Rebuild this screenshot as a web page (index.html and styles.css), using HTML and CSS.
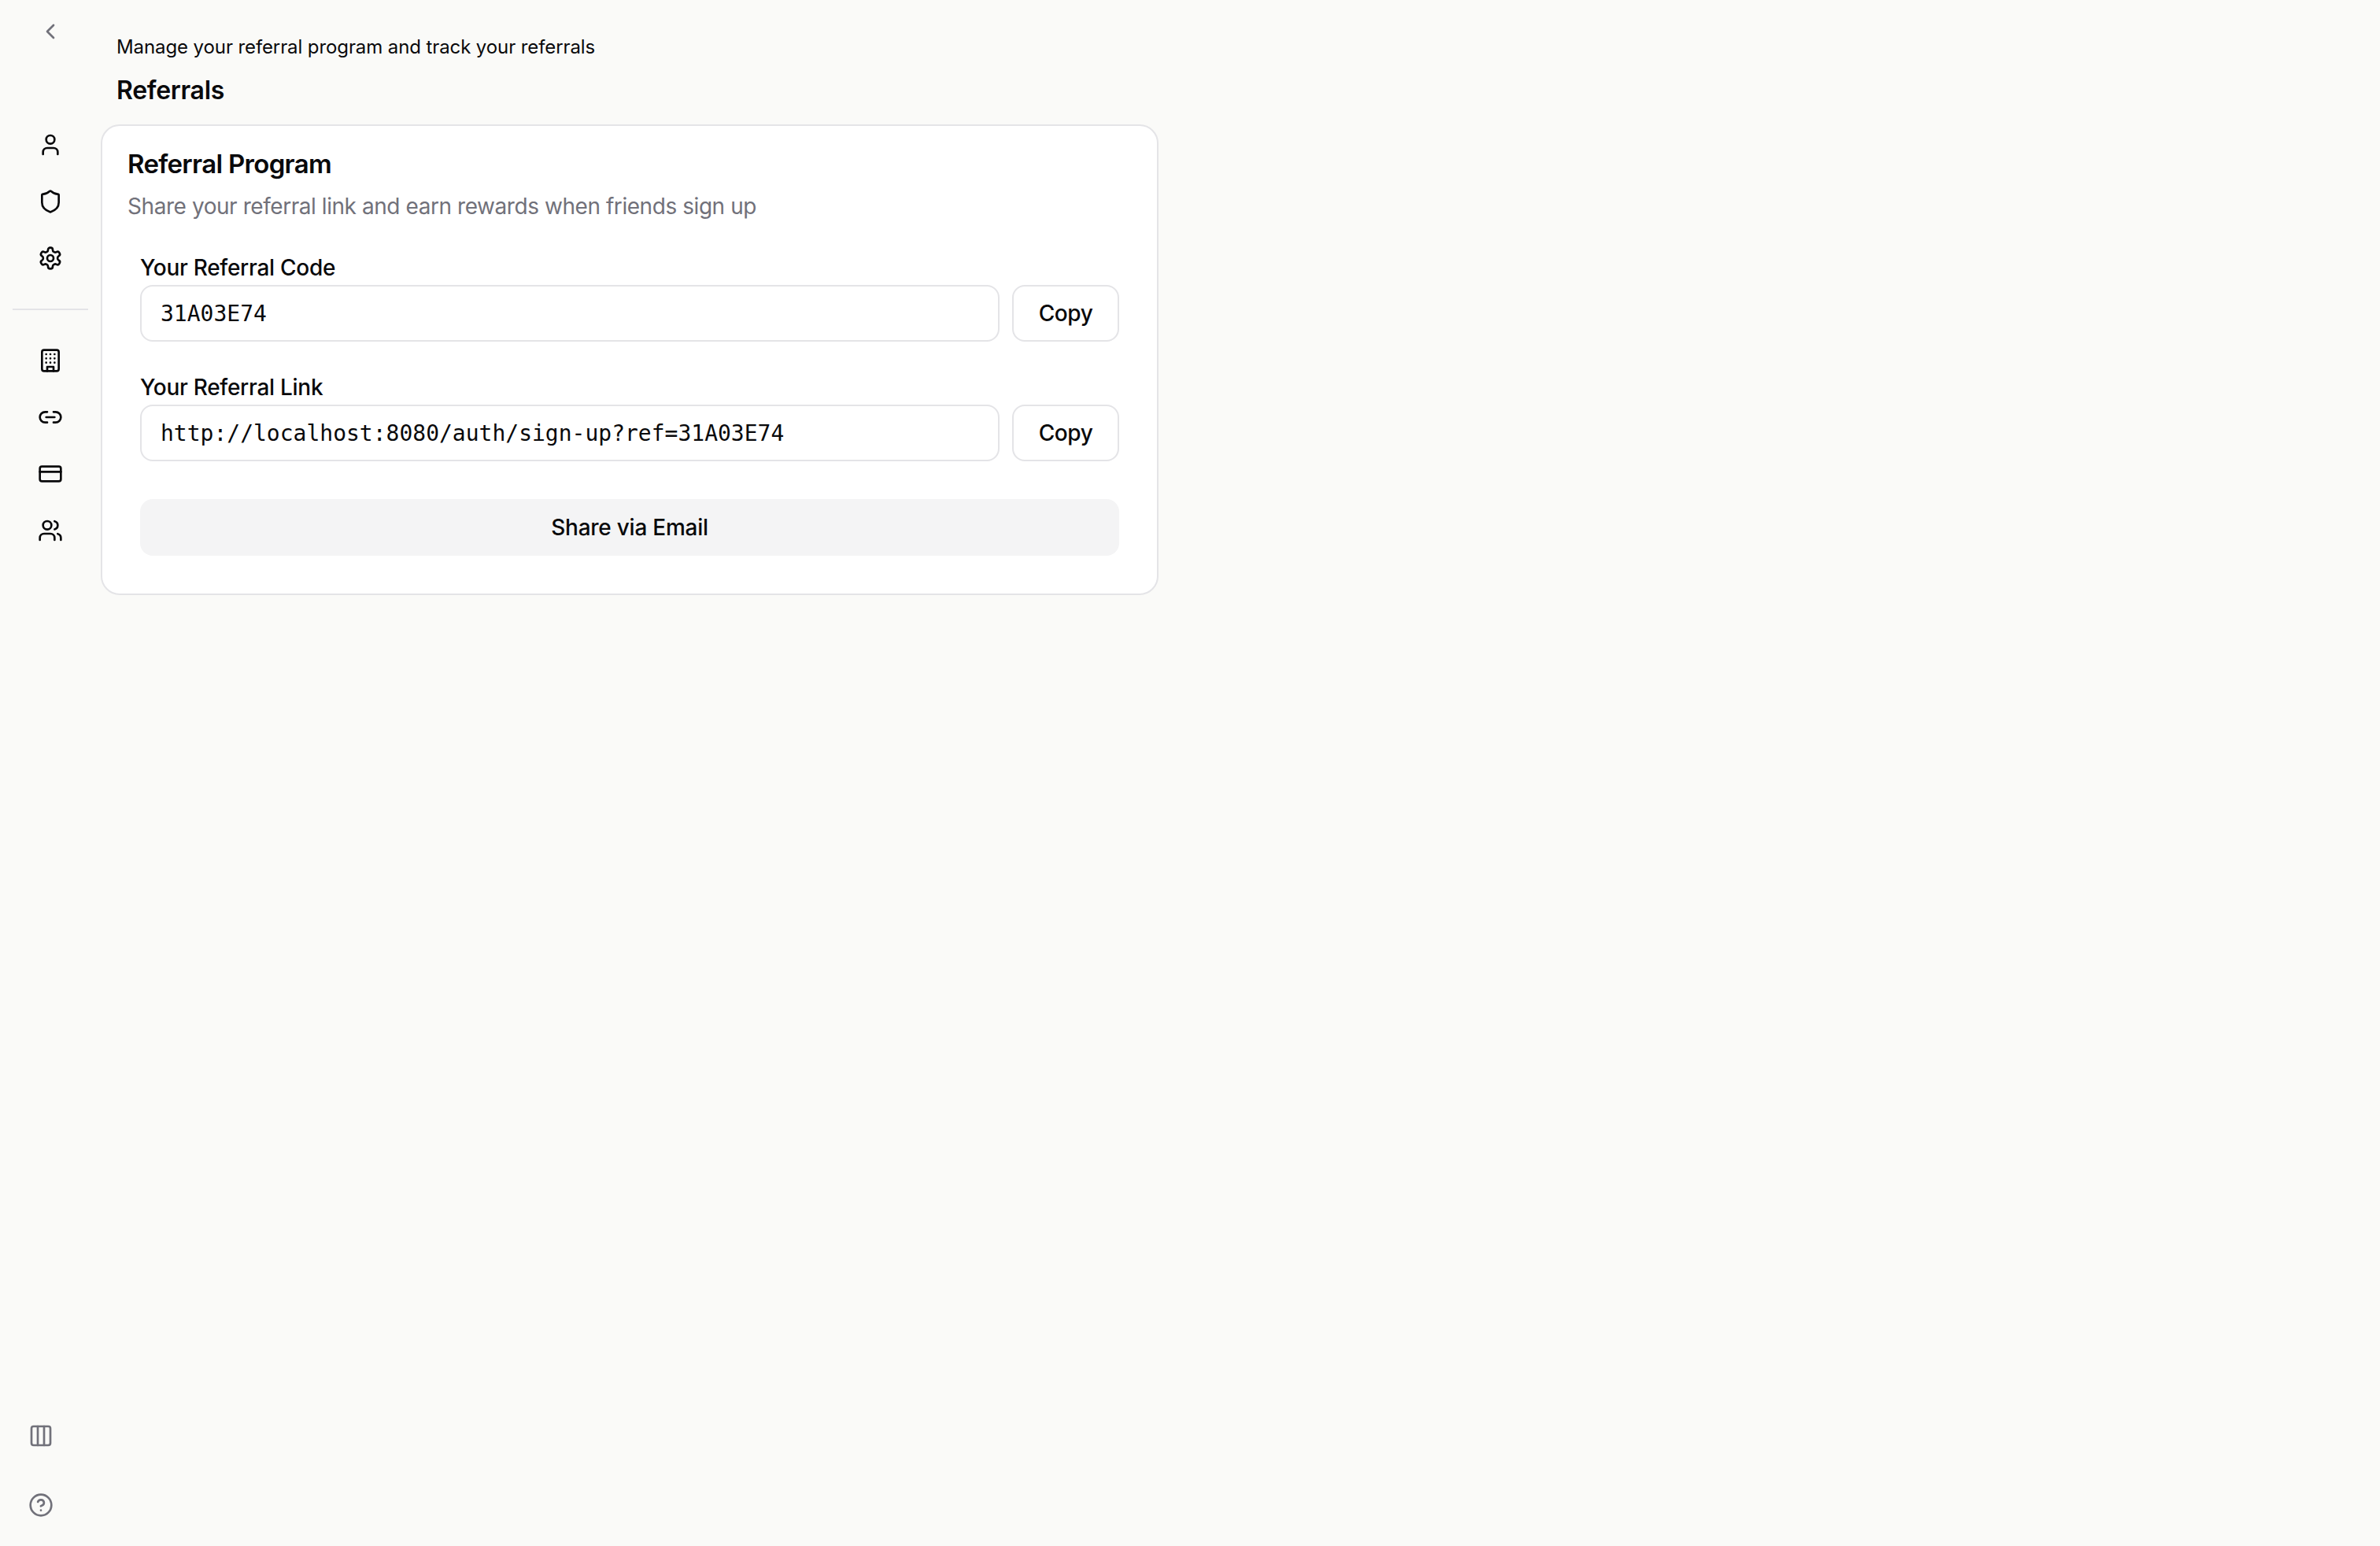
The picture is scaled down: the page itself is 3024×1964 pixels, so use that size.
FILE: index.html

```html
<!DOCTYPE html>
<html lang="en">
<head>
  <meta charset="UTF-8" />
  <title>Referrals</title>
  <link rel="stylesheet" href="styles.css">
</head>
<body>
  <aside class="sidebar">
    <div class="sidebar-top">
      <svg class="icon muted back" viewBox="0 0 24 24"><path d="m15 18-6-6 6-6"/></svg>
      <nav class="nav-group">
        <svg class="icon" viewBox="0 0 24 24"><path d="M19 21v-2a4 4 0 0 0-4-4H9a4 4 0 0 0-4 4v2"/><circle cx="12" cy="7" r="4"/></svg>
        <svg class="icon" viewBox="0 0 24 24"><path d="M20 13c0 5-3.5 7.5-7.66 8.95a1 1 0 0 1-.67-.01C7.5 20.5 4 18 4 13V6a1 1 0 0 1 1-1c2 0 4.5-1.2 6.24-2.72a1.17 1.17 0 0 1 1.52 0C14.51 3.81 17 5 19 5a1 1 0 0 1 1 1z"/></svg>
        <svg class="icon" viewBox="0 0 24 24"><path d="M12.22 2h-.44a2 2 0 0 0-2 2v.18a2 2 0 0 1-1 1.73l-.43.25a2 2 0 0 1-2 0l-.15-.08a2 2 0 0 0-2.73.73l-.22.38a2 2 0 0 0 .73 2.73l.15.1a2 2 0 0 1 1 1.72v.51a2 2 0 0 1-1 1.74l-.15.09a2 2 0 0 0-.73 2.73l.22.38a2 2 0 0 0 2.73.73l.15-.08a2 2 0 0 1 2 0l.43.25a2 2 0 0 1 1 1.73V20a2 2 0 0 0 2 2h.44a2 2 0 0 0 2-2v-.18a2 2 0 0 1 1-1.73l.43-.25a2 2 0 0 1 2 0l.15.08a2 2 0 0 0 2.73-.73l.22-.39a2 2 0 0 0-.73-2.73l-.15-.08a2 2 0 0 1-1-1.74v-.5a2 2 0 0 1 1-1.74l.15-.09a2 2 0 0 0 .73-2.73l-.22-.38a2 2 0 0 0-2.73-.73l-.15.08a2 2 0 0 1-2 0l-.43-.25a2 2 0 0 1-1-1.73V4a2 2 0 0 0-2-2z"/><circle cx="12" cy="12" r="3"/></svg>
      </nav>
      <div class="divider"></div>
      <nav class="nav-group">
        <svg class="icon" viewBox="0 0 24 24"><rect x="4" y="2" width="16" height="20" rx="2"/><path d="M9 22v-4h6v4"/><path d="M8 6h.01M16 6h.01M12 6h.01M12 10h.01M12 14h.01M16 10h.01M16 14h.01M8 10h.01M8 14h.01"/></svg>
        <svg class="icon" viewBox="0 0 24 24"><path d="M9 17H7A5 5 0 0 1 7 7h2"/><path d="M15 7h2a5 5 0 1 1 0 10h-2"/><line x1="8" x2="16" y1="12" y2="12"/></svg>
        <svg class="icon" viewBox="0 0 24 24"><rect x="2" y="5" width="20" height="14" rx="2"/><line x1="2" x2="22" y1="10" y2="10"/></svg>
        <svg class="icon" viewBox="0 0 24 24"><path d="M16 21v-2a4 4 0 0 0-4-4H6a4 4 0 0 0-4 4v2"/><circle cx="9" cy="7" r="4"/><path d="M22 21v-2a4 4 0 0 0-3-3.87"/><path d="M16 3.13a4 4 0 0 1 0 7.75"/></svg>
      </nav>
    </div>
    <div class="sidebar-bottom">
      <svg class="icon muted" viewBox="0 0 24 24"><rect x="3" y="3" width="18" height="18" rx="2"/><path d="M9 3v18"/><path d="M15 3v18"/></svg>
      <svg class="icon muted" viewBox="0 0 24 24"><circle cx="12" cy="12" r="10"/><path d="M9.09 9a3 3 0 0 1 5.83 1c0 2-3 3-3 3"/><path d="M12 17h.01"/></svg>
    </div>
  </aside>

  <main class="content">
    <header class="page-head">
      <p class="page-sub">Manage your referral program and track your referrals</p>
      <h1 class="page-title">Referrals</h1>
    </header>

    <section class="card">
      <div class="card-head">
        <h2 class="card-title">Referral Program</h2>
        <p class="card-desc">Share your referral link and earn rewards when friends sign up</p>
      </div>
      <div class="card-body">
        <div class="field">
          <label class="field-label">Your Referral Code</label>
          <div class="field-row">
            <div class="text-input">31A03E74</div>
            <button class="btn-copy">Copy</button>
          </div>
        </div>
        <div class="field">
          <label class="field-label">Your Referral Link</label>
          <div class="field-row">
            <div class="text-input">http://localhost:8080/auth/sign-up?ref=31A03E74</div>
            <button class="btn-copy">Copy</button>
          </div>
        </div>
        <button class="btn-share">Share via Email</button>
      </div>
    </section>
  </main>
</body>
</html>
```

FILE: styles.css

```css
* {
  box-sizing: border-box;
}
body {
  margin: 0;
  height: 1964px;
  display: flex;
  font-family: Inter, sans-serif;
  background-color: #fafaf8;
  color: #09090b;
}
.sidebar {
  width: 128px;
  flex-shrink: 0;
  display: flex;
  flex-direction: column;
  justify-content: space-between;
  padding: 24px 0 36px;
}
.sidebar-top {
  display: flex;
  flex-direction: column;
  align-items: center;
  width: 128px;
}
.icon {
  display: block;
  width: 32px;
  height: 32px;
  fill: none;
  stroke: #09090b;
  stroke-width: 2;
  stroke-linecap: round;
  stroke-linejoin: round;
}
.muted {
  stroke: #71717a;
}
.back {
  margin-bottom: 112px;
}
.nav-group {
  display: flex;
  flex-direction: column;
  gap: 40px;
}
.divider {
  width: 96px;
  height: 2px;
  margin: 48px 0;
  background-color: #e4e4e7;
}
.sidebar-bottom {
  display: flex;
  flex-direction: column;
  gap: 56px;
  padding-left: 36px;
}
.content {
  flex: 1;
}
.page-head {
  padding: 44px 0 0 20px;
}
.page-sub {
  margin: 0;
  font-size: 24px;
  line-height: 32px;
  letter-spacing: -0.1px;
}
.page-title {
  margin: 21px 0 25px;
  font-size: 32px;
  line-height: 36px;
  font-weight: 600;
  letter-spacing: -0.3px;
}
.card {
  width: 1344px;
  padding: 30px 48px 48px;
  background-color: #fff;
  border: 2px solid #e4e4e7;
  border-radius: 24px;
}
.card-head {
  margin: 0 -16px 38px;
}
.card-title {
  margin: 0 0 16px;
  font-size: 33px;
  line-height: 36px;
  font-weight: 600;
  letter-spacing: -0.7px;
}
.card-desc {
  margin: 0;
  font-size: 28px;
  line-height: 40px;
  letter-spacing: -0.44px;
  color: #71717a;
}
.field {
  margin-bottom: 38px;
}
.field-label {
  display: block;
  margin-bottom: 2px;
  font-size: 28px;
  line-height: 40px;
  font-weight: 500;
  letter-spacing: -0.28px;
}
.field-row {
  display: flex;
  gap: 16px;
}
.text-input {
  flex: 1;
  height: 72px;
  padding: 0 24px;
  border: 2px solid #e4e4e7;
  border-radius: 16px;
  background-color: #fff;
  font-family: "DejaVu Sans Mono", monospace;
  font-size: 28px;
  line-height: 70px;
}
.btn-copy {
  width: 136px;
  height: 72px;
  border: 2px solid #e4e4e7;
  border-radius: 16px;
  background-color: #fff;
  color: #09090b;
  font-family: Inter, sans-serif;
  font-size: 28px;
  font-weight: 500;
  letter-spacing: -0.4px;
}
.btn-share {
  display: block;
  width: 100%;
  height: 72px;
  margin-top: 48px;
  border: 0;
  border-radius: 16px;
  background-color: #f4f4f5;
  color: #09090b;
  font-family: Inter, sans-serif;
  font-size: 28px;
  font-weight: 500;
  letter-spacing: -0.25px;
}
```
